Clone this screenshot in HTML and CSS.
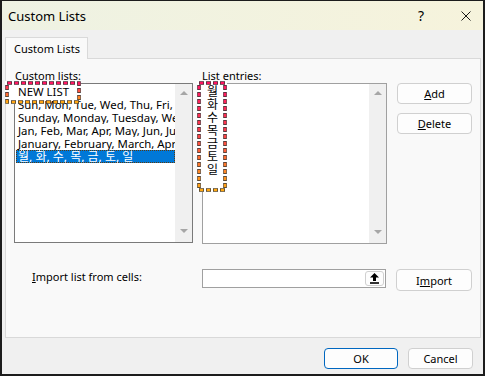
FILE: index.html
```html
<!DOCTYPE html>
<html lang="en">
<head>
  <meta charset="UTF-8">
  <title>Custom Lists</title>
  <link rel="stylesheet" href="styles.css">
</head>
<body>
  <div class="window">
    <!-- Title bar -->
    <div class="titlebar">
      <span class="title">Custom Lists</span>
      <span class="help">?</span>
      <svg class="close" width="10" height="10" viewBox="0 0 10 10">
        <path d="M0.5 0.5L9.5 9.5M9.5 0.5L0.5 9.5" stroke="#1a1a1a" stroke-width="1" fill="none"/>
      </svg>
    </div>

    <div class="client">
      <div class="tabs">
        <div class="tab">Custom Lists</div>
      </div>

      <div class="panel">
        <div class="lists">
          <!-- Custom lists -->
          <div class="col-left">
            <div class="label">Custom lists:</div>
            <div class="listbox">
              <ul class="items">
                <li>NEW LIST</li>
                <li>Sun, Mon, Tue, Wed, Thu, Fri, Sat</li>
                <li>Sunday, Monday, Tuesday, Wednesday</li>
                <li>Jan, Feb, Mar, Apr, May, Jun, Jul</li>
                <li>January, February, March, April</li>
                <li class="selected ko">월, 화, 수, 목, 금, 토, 일</li>
              </ul>
              <div class="scroll"><span class="up"></span><span class="down"></span></div>
            </div>
          </div>

          <!-- List entries -->
          <div class="col-right">
            <div class="label">List entries:</div>
            <div class="listbox light">
              <ul class="items ko">
                <li>월</li>
                <li>화</li>
                <li>수</li>
                <li>목</li>
                <li>금</li>
                <li>토</li>
                <li>일</li>
              </ul>
              <div class="scroll"><span class="up"></span><span class="down"></span></div>
            </div>
          </div>

          <div class="buttons">
            <button class="btn"><u>A</u>dd</button>
            <button class="btn"><u>D</u>elete</button>
          </div>
        </div>

        <!-- Import row -->
        <div class="import-row">
          <div class="import-label"><u>I</u>mport list from cells:</div>
          <div class="ref-input">
            <span class="ref-btn">
              <svg width="9" height="11" viewBox="0 0 9 11">
                <path d="M4.5 0L9 4.5H6V8H3V4.5H0Z" fill="#000"/>
                <rect x="0" y="9.2" width="9" height="1.6" fill="#000"/>
              </svg>
            </span>
          </div>
          <button class="btn import-btn">I<u>m</u>port</button>
        </div>

        <!-- Annotation marks -->
        <div class="mark-fill mark-left"></div>
        <div class="mark-fill mark-right"></div>
        <svg class="mark mark-left" width="76" height="23" viewBox="0 0 76 23">
          <defs>
            <linearGradient id="gl" x1="0" y1="0" x2="0" y2="1">
              <stop offset="0" stop-color="#ff1462"/>
              <stop offset="1" stop-color="#ffa812"/>
            </linearGradient>
          </defs>
          <rect x="2" y="2" width="72" height="19" fill="none" stroke="#333" stroke-width="3.6" stroke-dasharray="5 2"/>
          <rect x="2" y="2" width="72" height="19" fill="none" stroke="url(#gl)" stroke-width="2.6" stroke-dasharray="3.6 3.4" stroke-dashoffset="-0.7"/>
        </svg>
        <svg class="mark mark-right" width="30" height="111" viewBox="0 0 30 111">
          <defs>
            <linearGradient id="gr" x1="0" y1="0" x2="0" y2="1">
              <stop offset="0" stop-color="#ff1462"/>
              <stop offset="0.45" stop-color="#fb3a4a"/>
              <stop offset="1" stop-color="#ffa812"/>
            </linearGradient>
          </defs>
          <rect x="2" y="2" width="26" height="107" fill="none" stroke="#333" stroke-width="3.6" stroke-dasharray="5 2"/>
          <rect x="2" y="2" width="26" height="107" fill="none" stroke="url(#gr)" stroke-width="2.6" stroke-dasharray="3.6 3.4" stroke-dashoffset="-0.7"/>
        </svg>
      </div>

      <div class="footer">
        <button class="btn ok">OK</button>
        <button class="btn cancel">Cancel</button>
      </div>
    </div>
  </div>
</body>
</html>
```

FILE: styles.css
```css
/* Reset */
* {
  margin: 0;
  padding: 0;
  box-sizing: border-box;
}

body {
  width: 485px;
  height: 376px;
  font-family: "Noto Sans", "Noto Sans CJK KR", sans-serif;
  font-size: 11px;
  color: #000;
  background: #f0f0f0;
}

/* Window frame */
.window {
  width: 485px;
  height: 376px;
  border: 2px solid #1c1c1c;
  border-top-width: 1px;
  display: flex;
  flex-direction: column;
  background: #f0f0f0;
}

.titlebar {
  height: 29px;
  display: flex;
  align-items: center;
  padding-left: 6px;
  background: linear-gradient(to right, #eef2e3, #f6f3dc);
}

.title {
  flex: 1;
  font-size: 13px;
}

.help {
  width: 10px;
  margin-right: 35px;
  font-size: 14px;
  text-align: center;
}

.close {
  margin-right: 12px;
}

/* Client area */
.client {
  flex: 1;
  padding: 7px 2px 0 3px;
  display: flex;
  flex-direction: column;
}

.tabs {
  display: flex;
  height: 21px;
}

.tab {
  width: 83px;
  height: 22px;
  border: 1px solid #d9d9d9;
  border-bottom: none;
  background: #f9f9f9;
  padding-left: 8px;
  line-height: 21px;
  position: relative;
  z-index: 1;
}

.panel {
  height: 280px;
  border: 1px solid #d9d9d9;
  background: #f9f9f9;
  padding: 9px 8px 0;
  position: relative;
}

.lists {
  display: flex;
}

.col-left {
  width: 179px;
}

.col-right {
  width: 185px;
  margin-left: 9px;
}

.label {
  height: 15px;
  line-height: 15px;
  white-space: nowrap;
}

.col-left .label {
  padding-left: 1px;
}

/* List boxes */
.listbox {
  height: 160px;
  border: 1px solid #7a7a7a;
  background: #fff;
  display: flex;
}

.listbox.light {
  height: 161px;
  border-color: #a0a0a0;
}

.items {
  flex: 1;
  list-style: none;
  padding-top: 1px;
  overflow: hidden;
  font-size: 11.4px;
}

.items li {
  height: 13px;
  line-height: 13px;
  padding-left: 3px;
  white-space: nowrap;
  overflow: hidden;
  position: relative;
  z-index: 2;
}

/* Hangul comes from the CJK family, commas and spaces from Noto Sans */
.ko,
.items li.ko {
  font-size: 12px;
}

.items.ko li {
  padding-left: 4px;
}

.items li.selected {
  margin-left: 1px;
  padding-left: 2px;
  background: #0078d7;
  color: #fff;
  outline: 1px dotted #5a3a10;
  outline-offset: -1px;
}

.scroll {
  width: 17px;
  background: #f0f0f0;
  display: flex;
  flex-direction: column;
  align-items: center;
  justify-content: space-between;
  padding: 7px 0 9px;
}

.up {
  border-left: 4px solid transparent;
  border-right: 4px solid transparent;
  border-bottom: 4px solid #a6a6a6;
}

.down {
  border-left: 4px solid transparent;
  border-right: 4px solid transparent;
  border-top: 4px solid #a6a6a6;
}

/* Buttons */
.buttons {
  width: 75px;
  margin-left: 10px;
  padding-top: 15px;
  display: flex;
  flex-direction: column;
  gap: 9px;
}

.btn {
  height: 21px;
  border: 1px solid #d0d0d0;
  border-radius: 4px;
  background: #fdfdfd;
  font: inherit;
  color: #000;
  text-align: center;
}

/* Import row */
.import-row {
  display: flex;
  align-items: flex-start;
  margin-top: 25px;
}

.import-label {
  width: 188px;
  padding-left: 18px;
  line-height: 16px;
}

.ref-input {
  width: 185px;
  height: 19px;
  border: 1px solid #a0a0a0;
  background: #fff;
  display: flex;
  justify-content: flex-end;
  padding: 1px;
}

.ref-btn {
  width: 19px;
  height: 15px;
  border: 1px solid #d0d0d0;
  border-radius: 3px;
  background: #fdfdfd;
  display: flex;
  align-items: center;
  justify-content: center;
}

.import-btn {
  width: 76px;
  height: 22px;
  margin-left: 10px;
}

/* Annotation marks */
.mark-fill {
  position: absolute;
  background: #fff;
  z-index: 1;
}

.mark {
  position: absolute;
  z-index: 3;
}

.mark-left {
  left: -1px;
  top: 22px;
  width: 76px;
  height: 23px;
}

.mark-right {
  left: 191px;
  top: 22px;
  width: 30px;
  height: 111px;
}

/* Footer */
.footer {
  display: flex;
  justify-content: flex-end;
  gap: 10px;
  padding: 10px 8px 0 0;
}

.ok {
  width: 74px;
  border-color: #0067c0;
}

.cancel {
  width: 65px;
}
```
